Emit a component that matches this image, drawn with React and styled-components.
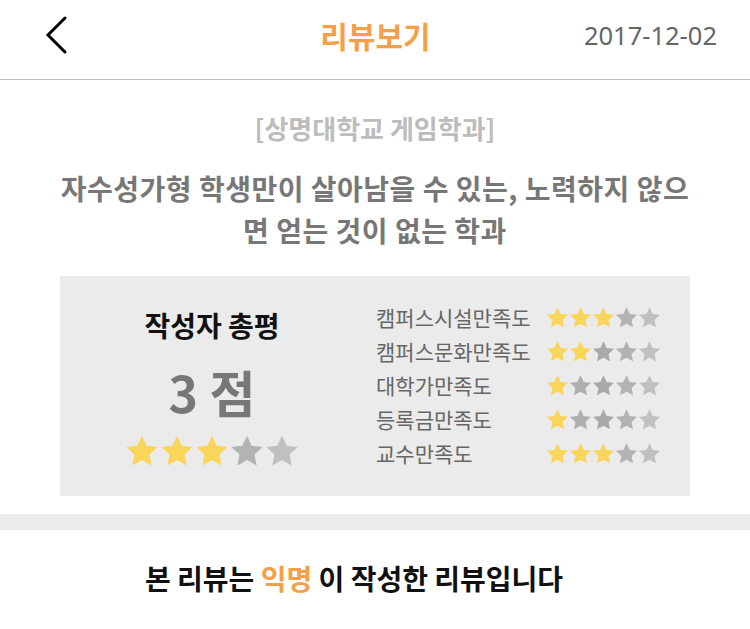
import React from "react";
import styled, { createGlobalStyle } from "styled-components";

const Global = createGlobalStyle`
  html, body { margin: 0; padding: 0; background: #fff; }
  body { font-family: "Noto Sans CJK KR", "Noto Sans", sans-serif; }
  * { box-sizing: border-box; }
`;

const Page = styled.div`
  width: 750px;
  min-height: 629px;
  background: #fff;
  display: flex;
  flex-direction: column;
`;

const Header = styled.header`
  height: 80px;
  border-bottom: 1px solid #bdbdbd;
  display: grid;
  grid-template-columns: 1fr auto 1fr;
  align-items: center;
  padding: 0 33px 10px 40px;
`;

const BackButton = styled.button`
  justify-self: start;
  border: 0;
  background: none;
  padding: 0;
  width: 32px;
  height: 40px;
  display: flex;
  align-items: center;
  cursor: pointer;
`;

const Title = styled.h1`
  margin: 0 0 0 -6px;
  font-size: 30px;
  font-weight: 700;
  color: #f4a048;
  line-height: 40px;
`;

const DateText = styled.span`
  justify-self: end;
  font-family: "Noto Sans", sans-serif;
  font-size: 25.5px;
  color: #666;
`;

const Content = styled.section`
  padding: 31px 60px 18px;
  display: flex;
  flex-direction: column;
  align-items: center;
`;

const Dept = styled.div`
  font-size: 26px;
  font-weight: 700;
  color: #bcbcbc;
  line-height: 34px;
`;

const Headline = styled.h2`
  margin: 22px 0 0;
  width: 630px;
  text-align: center;
  font-size: 28px;
  letter-spacing: 0.5px;
  font-weight: 700;
  color: #777;
  line-height: 42px;
`;

const ScoreBox = styled.div`
  margin-top: 25px;
  width: 630px;
  height: 220px;
  background: #ebebeb;
  display: grid;
  grid-template-columns: 304px 1fr;
  align-items: start;
`;

const Summary = styled.div`
  display: flex;
  flex-direction: column;
  align-items: center;
  padding-top: 32px;
`;

const SummaryLabel = styled.div`
  font-size: 28px;
  font-weight: 700;
  color: #111;
  line-height: 34px;
`;

const BigScore = styled.div`
  margin-top: 21px;
  font-size: 50px;
  font-weight: 700;
  color: #777;
  line-height: 56px;
`;

const StarRow = styled.div`
  display: flex;
  gap: ${(p) => p.$gap}px;
  margin-top: ${(p) => p.$mt || 0}px;
`;

const Details = styled.div`
  display: flex;
  flex-direction: column;
  padding-left: 12px;
  padding-top: 24px;
`;

const DetailRow = styled.div`
  display: grid;
  grid-template-columns: 170px auto;
  align-items: center;
  height: 34px;
`;

const DetailLabel = styled.span`
  font-size: 21px;
  color: #666;
  line-height: 34px;
`;

const Band = styled.div`
  height: 16px;
  background: #ebebeb;
`;

const Footer = styled.div`
  padding: 28px 42px 0 0;
  text-align: center;
  font-size: 28px;
  font-weight: 700;
  color: #111;
  line-height: 40px;
`;

const Accent = styled.span`
  color: #f4a048;
`;

const GRAYS = ["#afafb1", "#afafb1", "#a9a9ab", "#b3b3b5", "#bfc0c2"];

function Star({ size, on, index }) {
  return (
    <svg width={size} height={size} viewBox="0 0 24 24">
      <path
        d="M12 1.2l3.3 7.1 7.7.9-5.7 5.3 1.5 7.7L12 18.4l-6.8 3.8 1.5-7.7L1 9.2l7.7-.9z"
        fill={on ? "#f9d55a" : GRAYS[index]}
      />
    </svg>
  );
}

function Stars({ count, size, gap, mt }) {
  return (
    <StarRow $gap={gap} $mt={mt}>
      {[0, 1, 2, 3, 4].map((i) => (
        <Star key={i} size={size} on={i < count} index={i} />
      ))}
    </StarRow>
  );
}

const details = [
  ["캠퍼스시설만족도", 3],
  ["캠퍼스문화만족도", 2],
  ["대학가만족도", 1],
  ["등록금만족도", 1],
  ["교수만족도", 3],
];

export default function App() {
  return (
    <Page>
      <Global />
      <Header>
        <BackButton aria-label="뒤로">
          <svg width="32" height="40" viewBox="0 0 32 40">
            <polyline
              points="25,3 8,20 25,37"
              fill="none"
              stroke="#000"
              strokeWidth="3"
              strokeLinecap="round"
              strokeLinejoin="miter"
            />
          </svg>
        </BackButton>
        <Title>리뷰보기</Title>
        <DateText>2017-12-02</DateText>
      </Header>
      <Content>
        <Dept>[상명대학교 게임학과]</Dept>
        <Headline>
          자수성가형 학생만이 살아남을 수 있는, 노력하지 않으면 얻는 것이 없는 학과
        </Headline>
        <ScoreBox>
          <Summary>
            <SummaryLabel>작성자 총평</SummaryLabel>
            <BigScore>3 점</BigScore>
            <Stars count={3} size={34} gap={1} mt={15} />
          </Summary>
          <Details>
            {details.map(([label, n]) => (
              <DetailRow key={label}>
                <DetailLabel>{label}</DetailLabel>
                <Stars count={n} size={23} gap={0} />
              </DetailRow>
            ))}
          </Details>
        </ScoreBox>
      </Content>
      <Band />
      <Footer>
        본 리뷰는 <Accent>익명</Accent> 이 작성한 리뷰입니다
      </Footer>
    </Page>
  );
}
